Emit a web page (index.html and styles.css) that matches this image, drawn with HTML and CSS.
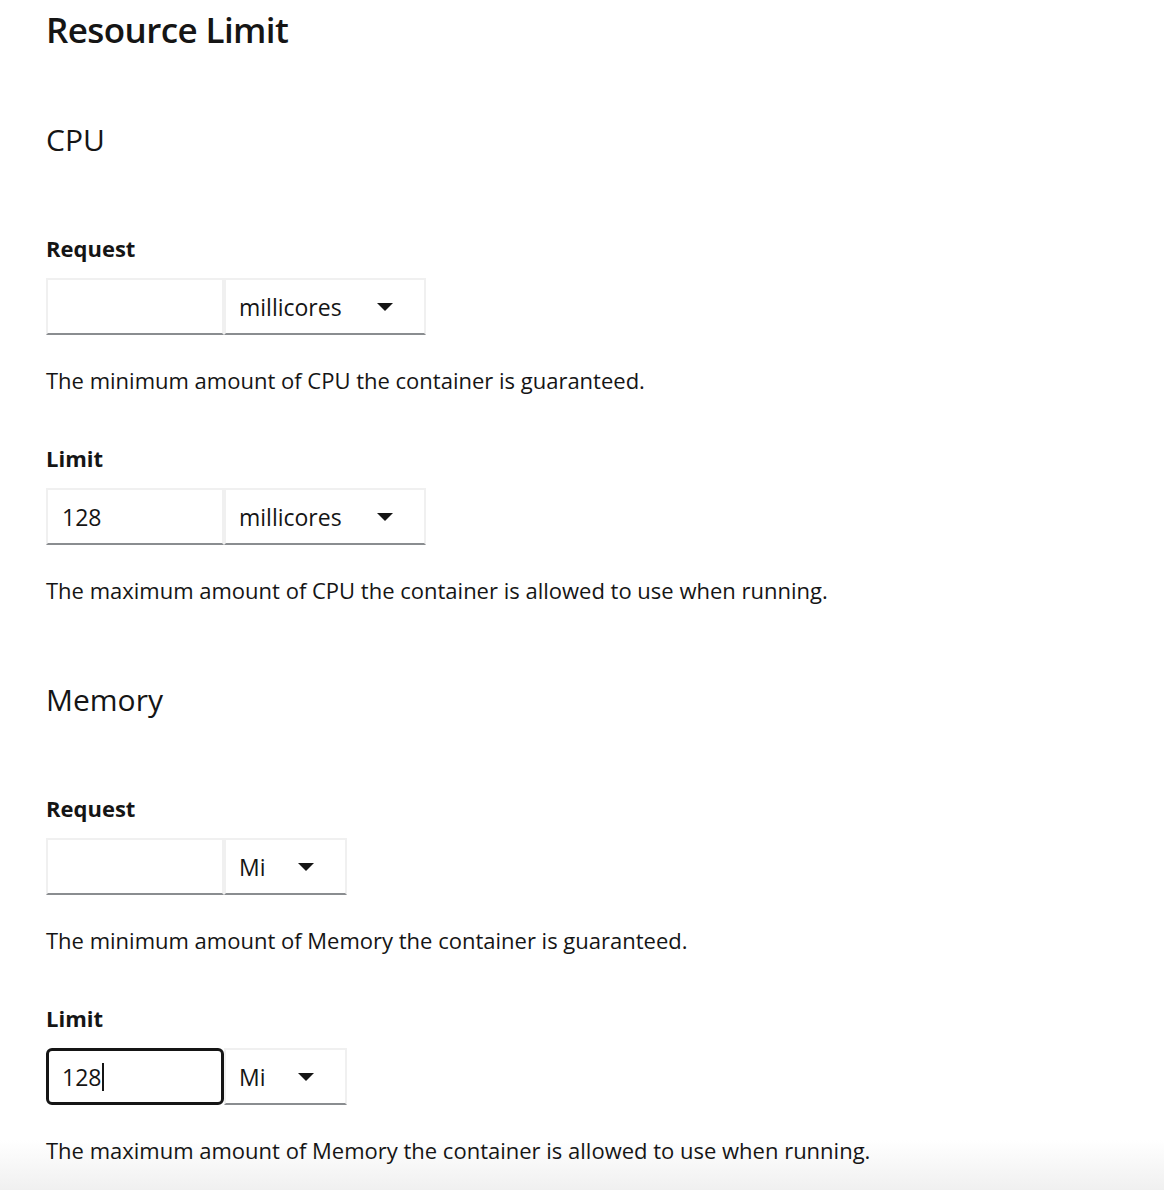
FILE: index.html
```html
<!DOCTYPE html>
<html lang="en">
<head>
<meta charset="utf-8">
<title>Resource Limit</title>
<link rel="stylesheet" href="styles.css">
</head>
<body>
<main class="page">
  <h1 class="title">Resource Limit</h1>

  <section class="group">
    <h2 class="group-title">CPU</h2>

    <div class="field">
      <label class="label">Request</label>
      <div class="input-group">
        <div class="text-input"></div>
        <div class="select select-wide"><span>millicores</span><svg class="caret" viewBox="0 0 16 8"><path d="M0 0h16L8 8z"/></svg></div>
      </div>
      <p class="helper">The minimum amount of CPU the container is guaranteed.</p>
    </div>

    <div class="field">
      <label class="label">Limit</label>
      <div class="input-group">
        <div class="text-input">128</div>
        <div class="select select-wide"><span>millicores</span><svg class="caret" viewBox="0 0 16 8"><path d="M0 0h16L8 8z"/></svg></div>
      </div>
      <p class="helper">The maximum amount of CPU the container is allowed to use when running.</p>
    </div>
  </section>

  <section class="group">
    <h2 class="group-title">Memory</h2>

    <div class="field">
      <label class="label">Request</label>
      <div class="input-group">
        <div class="text-input"></div>
        <div class="select select-narrow"><span>Mi</span><svg class="caret" viewBox="0 0 16 8"><path d="M0 0h16L8 8z"/></svg></div>
      </div>
      <p class="helper">The minimum amount of Memory the container is guaranteed.</p>
    </div>

    <div class="field">
      <label class="label">Limit</label>
      <div class="input-group">
        <div class="text-input focused">128<span class="cursor"></span></div>
        <div class="select select-narrow"><span>Mi</span><svg class="caret" viewBox="0 0 16 8"><path d="M0 0h16L8 8z"/></svg></div>
      </div>
      <p class="helper">The maximum amount of Memory the container is allowed to use when running.</p>
    </div>
  </section>
</main>
</body>
</html>
```

FILE: styles.css
```css
html, body {
  margin: 0;
  padding: 0;
}

body {
  min-height: 1190px;
  background: linear-gradient(to bottom, #ffffff calc(100% - 50px), #f0f0f0 100%);
  color: #151515;
  font-family: "Open Sans", "Liberation Sans", sans-serif;
}

.page {
  padding: 0 0 0 46px;
}

.title {
  margin: 0;
  padding-top: 7px;
  font-size: 35px;
  line-height: 46px;
  font-weight: 600;
  letter-spacing: -0.6px;
}

.group {
  display: flex;
  flex-direction: column;
}

.group-title {
  margin: 75px 0 0;
  font-size: 30px;
  line-height: 40px;
  font-weight: 400;
}

.group:first-of-type .group-title {
  margin-top: 67px;
}

.field {
  display: flex;
  flex-direction: column;
}

.group-title + .field {
  margin-top: 74px;
}

.field + .field {
  margin-top: 49px;
}

.label {
  font-size: 22px;
  line-height: 28px;
  font-weight: 700;
}

.input-group {
  display: flex;
  margin-top: 16px;
  height: 57px;
}

.text-input {
  box-sizing: border-box;
  width: 178px;
  height: 57px;
  border: 2px solid #f0f0f0;
  border-bottom-color: #8a8d90;
  padding: 0 14px;
  font-size: 23px;
  display: flex;
  align-items: center;
}

.text-input.focused {
  border: 3px solid #151515;
  border-radius: 6px;
  padding-left: 13px;
}

.cursor {
  display: inline-block;
  width: 2px;
  height: 28px;
  background: #151515;
  margin-left: 1px;
}

.select {
  box-sizing: border-box;
  height: 57px;
  border: 2px solid #f0f0f0;
  border-bottom-color: #8a8d90;
  display: flex;
  align-items: center;
  padding: 0 31px 0 13px;
  font-size: 23px;
  justify-content: space-between;
}

.select-wide {
  width: 202px;
}

.select-narrow {
  width: 123px;
}

.caret {
  width: 16px;
  height: 8px;
  fill: #151515;
}

.helper {
  margin: 30px 0 0;
  font-size: 22px;
  line-height: 30px;
}
```
